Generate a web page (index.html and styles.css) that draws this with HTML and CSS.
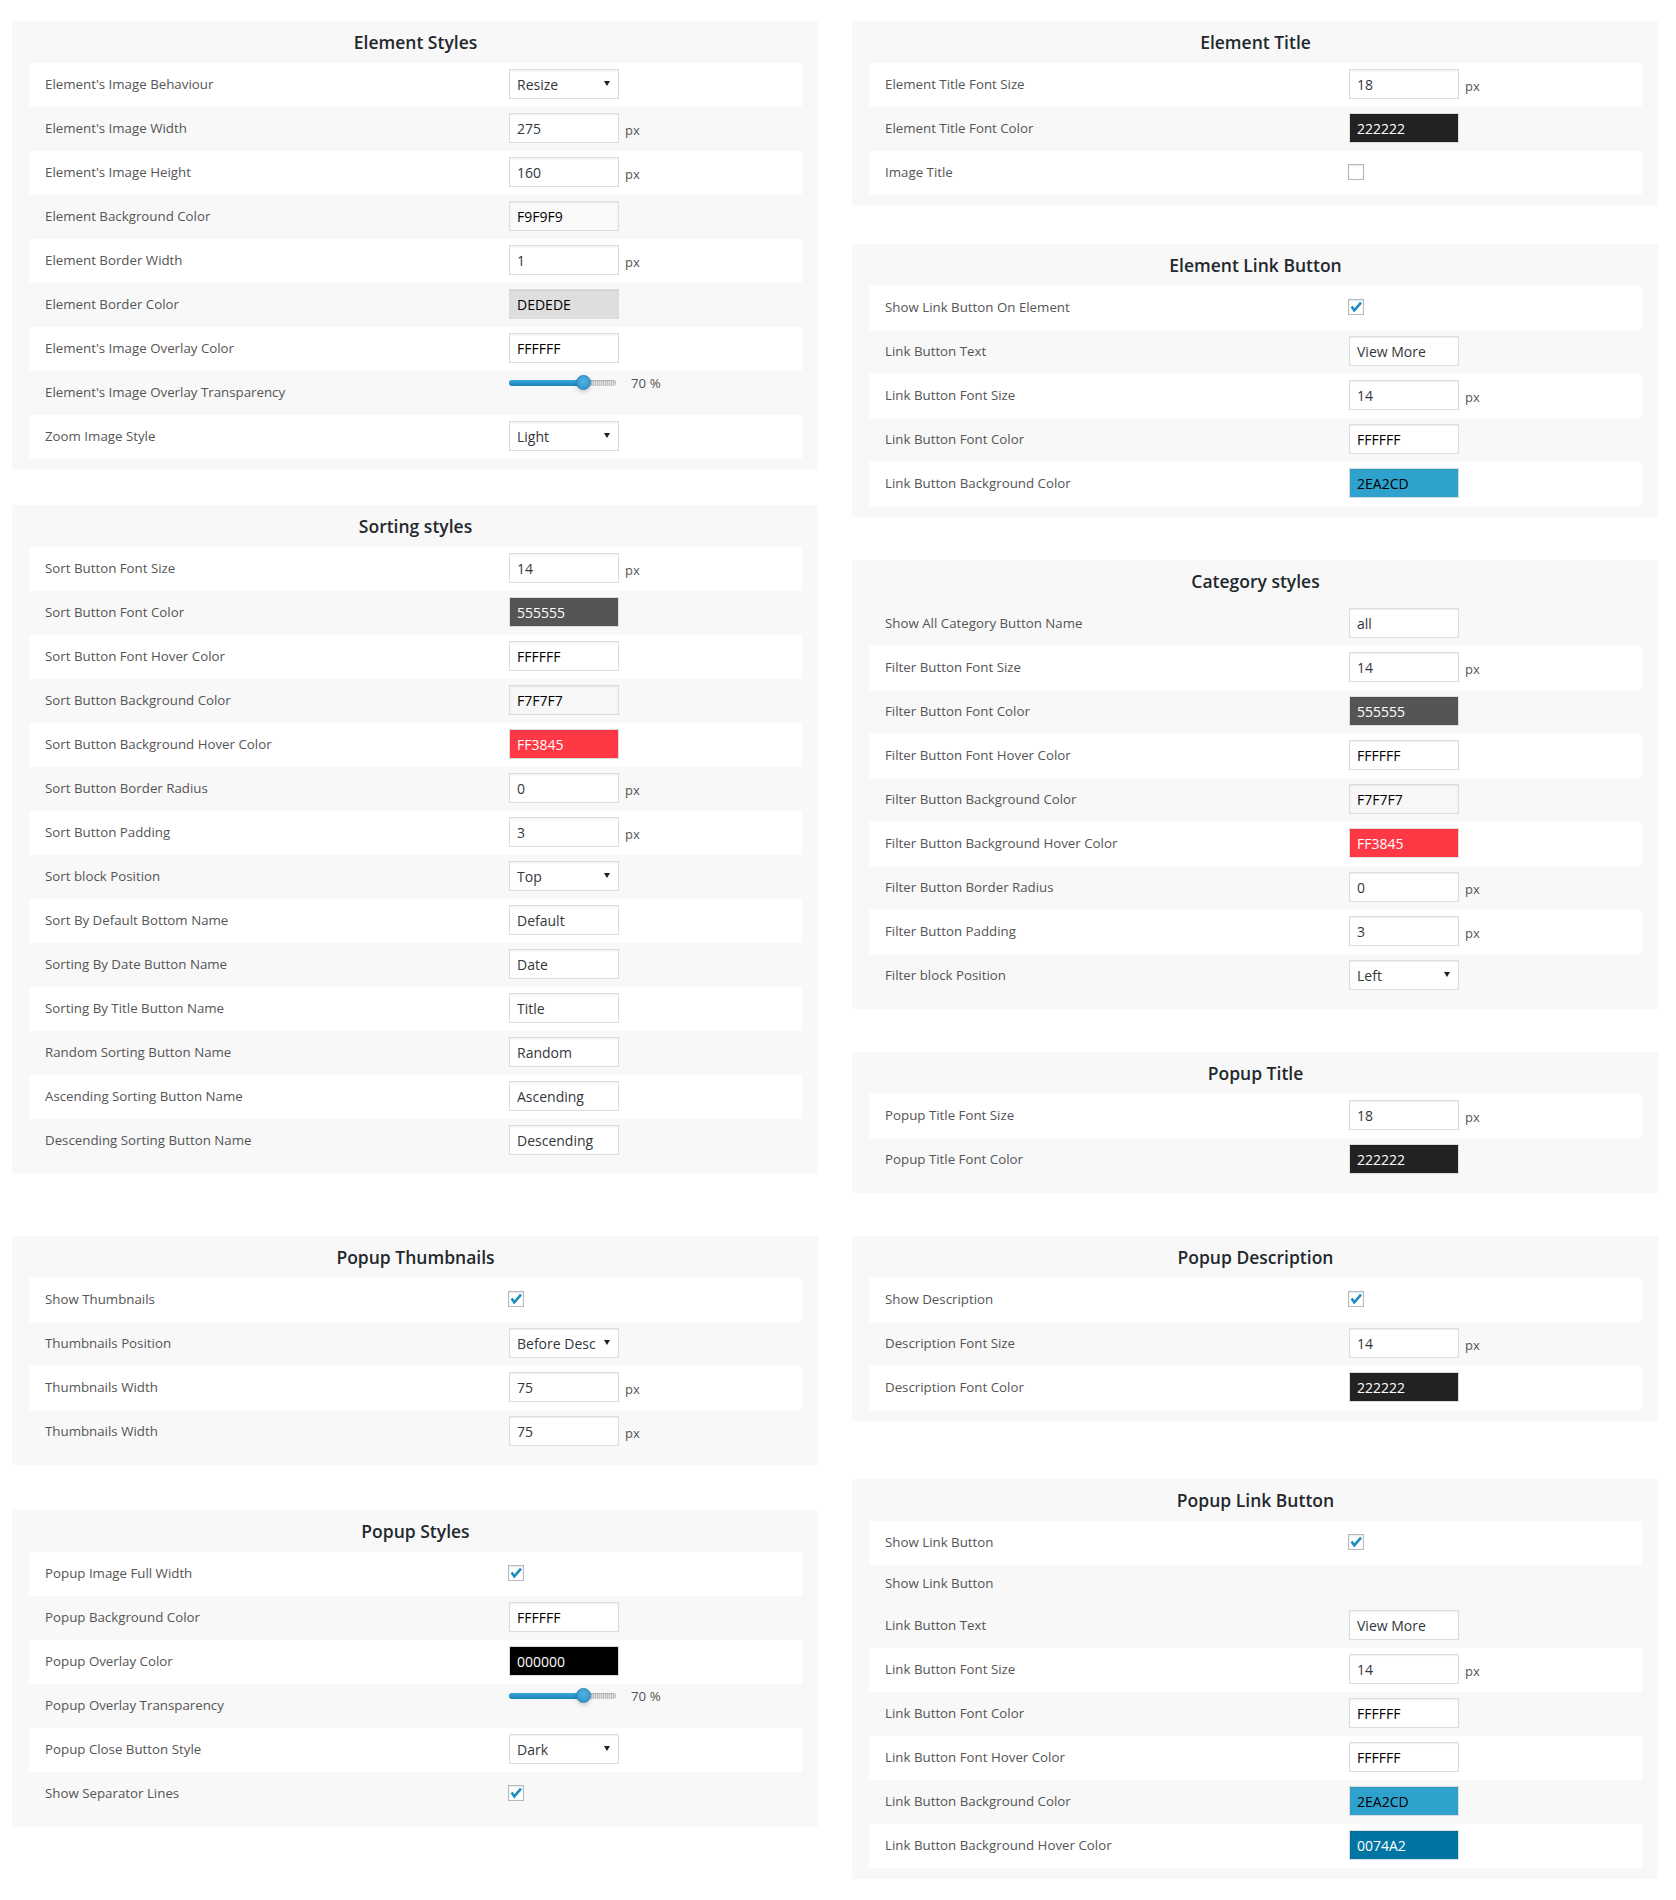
FILE: index.html
```html
<!DOCTYPE html>
<html lang="en">
<head>
<meta charset="utf-8">
<title>Gallery Settings</title>
<link rel="stylesheet" href="styles.css">
</head>
<body>
<div class="page">

  <!-- Row 1, left -->
  <div class="stack">
    <section class="panel gap-35">
      <h2 class="panel-title">Element Styles</h2>
      <div class="row w"><span class="label">Element's Image Behaviour</span><div class="value"><span class="select-wrap"><select class="field"><option>Resize</option></select></span></div></div>
      <div class="row"><span class="label">Element's Image Width</span><div class="value"><input class="field" type="text" value="275"><span class="unit">px</span></div></div>
      <div class="row w"><span class="label">Element's Image Height</span><div class="value"><input class="field" type="text" value="160"><span class="unit">px</span></div></div>
      <div class="row"><span class="label">Element Background Color</span><div class="value"><input class="field color bg-f9f9f9" type="text" value="F9F9F9"></div></div>
      <div class="row w"><span class="label">Element Border Width</span><div class="value"><input class="field" type="text" value="1"><span class="unit">px</span></div></div>
      <div class="row"><span class="label">Element Border Color</span><div class="value"><input class="field color bg-dedede" type="text" value="DEDEDE"></div></div>
      <div class="row w"><span class="label">Element's Image Overlay Color</span><div class="value"><input class="field color bg-ffffff" type="text" value="FFFFFF"></div></div>
      <div class="row"><span class="label">Element's Image Overlay Transparency</span><div class="value top"><div class="slider" style="--v:70%"><div class="track"><div class="fill"></div><div class="thumb"></div></div><span class="pct">70 %</span></div></div></div>
      <div class="row w"><span class="label">Zoom Image Style</span><div class="value"><span class="select-wrap"><select class="field"><option>Light</option></select></span></div></div>
    </section>

    <section class="panel">
      <h2 class="panel-title">Sorting styles</h2>
      <div class="row w"><span class="label">Sort Button Font Size</span><div class="value"><input class="field" type="text" value="14"><span class="unit">px</span></div></div>
      <div class="row"><span class="label">Sort Button Font Color</span><div class="value"><input class="field color bg-555555 dark" type="text" value="555555"></div></div>
      <div class="row w"><span class="label">Sort Button Font Hover Color</span><div class="value"><input class="field color bg-ffffff" type="text" value="FFFFFF"></div></div>
      <div class="row"><span class="label">Sort Button Background Color</span><div class="value"><input class="field color bg-f7f7f7" type="text" value="F7F7F7"></div></div>
      <div class="row w"><span class="label">Sort Button Background Hover Color</span><div class="value"><input class="field color bg-ff3845 dark" type="text" value="FF3845"></div></div>
      <div class="row"><span class="label">Sort Button Border Radius</span><div class="value"><input class="field" type="text" value="0"><span class="unit">px</span></div></div>
      <div class="row w"><span class="label">Sort Button Padding</span><div class="value"><input class="field" type="text" value="3"><span class="unit">px</span></div></div>
      <div class="row"><span class="label">Sort block Position</span><div class="value"><span class="select-wrap"><select class="field"><option>Top</option></select></span></div></div>
      <div class="row w"><span class="label">Sort By Default Bottom Name</span><div class="value"><input class="field" type="text" value="Default"></div></div>
      <div class="row"><span class="label">Sorting By Date Button Name</span><div class="value"><input class="field" type="text" value="Date"></div></div>
      <div class="row w"><span class="label">Sorting By Title Button Name</span><div class="value"><input class="field" type="text" value="Title"></div></div>
      <div class="row"><span class="label">Random Sorting Button Name</span><div class="value"><input class="field" type="text" value="Random"></div></div>
      <div class="row w"><span class="label">Ascending Sorting Button Name</span><div class="value"><input class="field" type="text" value="Ascending"></div></div>
      <div class="row"><span class="label">Descending Sorting Button Name</span><div class="value"><input class="field" type="text" value="Descending"></div></div>
    </section>
  </div>

  <!-- Row 1, right -->
  <div class="stack">
    <section class="panel gap-38">
      <h2 class="panel-title">Element Title</h2>
      <div class="row w"><span class="label">Element Title Font Size</span><div class="value"><input class="field" type="text" value="18"><span class="unit">px</span></div></div>
      <div class="row"><span class="label">Element Title Font Color</span><div class="value"><input class="field color bg-222222 dark" type="text" value="222222"></div></div>
      <div class="row w"><span class="label">Image Title</span><div class="value"><span class="check"></span></div></div>
    </section>

    <section class="panel gap-43">
      <h2 class="panel-title">Element Link Button</h2>
      <div class="row w"><span class="label">Show Link Button On Element</span><div class="value"><span class="check"><svg viewBox="0 0 14 14" width="14" height="14"><path d="M2.6 6.6 L5.3 10.4 L12 2.6"/></svg></span></div></div>
      <div class="row"><span class="label">Link Button Text</span><div class="value"><input class="field" type="text" value="View More"></div></div>
      <div class="row w"><span class="label">Link Button Font Size</span><div class="value"><input class="field" type="text" value="14"><span class="unit">px</span></div></div>
      <div class="row"><span class="label">Link Button Font Color</span><div class="value"><input class="field color bg-ffffff" type="text" value="FFFFFF"></div></div>
      <div class="row w"><span class="label">Link Button Background Color</span><div class="value"><input class="field color bg-2ea2cd" type="text" value="2EA2CD"></div></div>
    </section>

    <section class="panel gap-43">
      <h2 class="panel-title">Category styles</h2>
      <div class="row"><span class="label">Show All Category Button Name</span><div class="value"><input class="field" type="text" value="all"></div></div>
      <div class="row w"><span class="label">Filter Button Font Size</span><div class="value"><input class="field" type="text" value="14"><span class="unit">px</span></div></div>
      <div class="row"><span class="label">Filter Button Font Color</span><div class="value"><input class="field color bg-555555 dark" type="text" value="555555"></div></div>
      <div class="row w"><span class="label">Filter Button Font Hover Color</span><div class="value"><input class="field color bg-ffffff" type="text" value="FFFFFF"></div></div>
      <div class="row"><span class="label">Filter Button Background Color</span><div class="value"><input class="field color bg-f7f7f7" type="text" value="F7F7F7"></div></div>
      <div class="row w"><span class="label">Filter Button Background Hover Color</span><div class="value"><input class="field color bg-ff3845 dark" type="text" value="FF3845"></div></div>
      <div class="row"><span class="label">Filter Button Border Radius</span><div class="value"><input class="field" type="text" value="0"><span class="unit">px</span></div></div>
      <div class="row w"><span class="label">Filter Button Padding</span><div class="value"><input class="field" type="text" value="3"><span class="unit">px</span></div></div>
      <div class="row"><span class="label">Filter block Position</span><div class="value"><span class="select-wrap"><select class="field"><option>Left</option></select></span></div></div>
    </section>

    <section class="panel">
      <h2 class="panel-title">Popup Title</h2>
      <div class="row w"><span class="label">Popup Title Font Size</span><div class="value"><input class="field" type="text" value="18"><span class="unit">px</span></div></div>
      <div class="row"><span class="label">Popup Title Font Color</span><div class="value"><input class="field color bg-222222 dark" type="text" value="222222"></div></div>
    </section>
  </div>

  <!-- Row 2, left -->
  <div class="stack">
    <section class="panel gap-45">
      <h2 class="panel-title">Popup Thumbnails</h2>
      <div class="row w"><span class="label">Show Thumbnails</span><div class="value"><span class="check"><svg viewBox="0 0 14 14" width="14" height="14"><path d="M2.6 6.6 L5.3 10.4 L12 2.6"/></svg></span></div></div>
      <div class="row"><span class="label">Thumbnails Position</span><div class="value"><span class="select-wrap"><select class="field"><option>Before Desc</option></select></span></div></div>
      <div class="row w"><span class="label">Thumbnails Width</span><div class="value"><input class="field" type="text" value="75"><span class="unit">px</span></div></div>
      <div class="row"><span class="label">Thumbnails Width</span><div class="value"><input class="field" type="text" value="75"><span class="unit">px</span></div></div>
    </section>

    <section class="panel">
      <h2 class="panel-title">Popup Styles</h2>
      <div class="row w"><span class="label">Popup Image Full Width</span><div class="value"><span class="check"><svg viewBox="0 0 14 14" width="14" height="14"><path d="M2.6 6.6 L5.3 10.4 L12 2.6"/></svg></span></div></div>
      <div class="row"><span class="label">Popup Background Color</span><div class="value"><input class="field color bg-ffffff" type="text" value="FFFFFF"></div></div>
      <div class="row w"><span class="label">Popup Overlay Color</span><div class="value"><input class="field color bg-000000 dark" type="text" value="000000"></div></div>
      <div class="row"><span class="label">Popup Overlay Transparency</span><div class="value top"><div class="slider" style="--v:70%"><div class="track"><div class="fill"></div><div class="thumb"></div></div><span class="pct">70 %</span></div></div></div>
      <div class="row w"><span class="label">Popup Close Button Style</span><div class="value"><span class="select-wrap"><select class="field"><option>Dark</option></select></span></div></div>
      <div class="row"><span class="label">Show Separator Lines</span><div class="value"><span class="check"><svg viewBox="0 0 14 14" width="14" height="14"><path d="M2.6 6.6 L5.3 10.4 L12 2.6"/></svg></span></div></div>
    </section>
  </div>

  <!-- Row 2, right -->
  <div class="stack">
    <section class="panel gap-58">
      <h2 class="panel-title">Popup Description</h2>
      <div class="row w"><span class="label">Show Description</span><div class="value"><span class="check"><svg viewBox="0 0 14 14" width="14" height="14"><path d="M2.6 6.6 L5.3 10.4 L12 2.6"/></svg></span></div></div>
      <div class="row"><span class="label">Description Font Size</span><div class="value"><input class="field" type="text" value="14"><span class="unit">px</span></div></div>
      <div class="row w"><span class="label">Description Font Color</span><div class="value"><input class="field color bg-222222 dark" type="text" value="222222"></div></div>
    </section>

    <section class="panel">
      <h2 class="panel-title">Popup Link Button</h2>
      <div class="row w"><span class="label">Show Link Button</span><div class="value"><span class="check"><svg viewBox="0 0 14 14" width="14" height="14"><path d="M2.6 6.6 L5.3 10.4 L12 2.6"/></svg></span></div></div>
      <div class="row short"><span class="label">Show Link Button</span><div class="value"></div></div>
      <div class="row"><span class="label">Link Button Text</span><div class="value"><input class="field" type="text" value="View More"></div></div>
      <div class="row w"><span class="label">Link Button Font Size</span><div class="value"><input class="field" type="text" value="14"><span class="unit">px</span></div></div>
      <div class="row"><span class="label">Link Button Font Color</span><div class="value"><input class="field color bg-ffffff" type="text" value="FFFFFF"></div></div>
      <div class="row w"><span class="label">Link Button Font Hover Color</span><div class="value"><input class="field color bg-ffffff" type="text" value="FFFFFF"></div></div>
      <div class="row"><span class="label">Link Button Background Color</span><div class="value"><input class="field color bg-2ea2cd" type="text" value="2EA2CD"></div></div>
      <div class="row w"><span class="label">Link Button Background Hover Color</span><div class="value"><input class="field color bg-0074a2 dark" type="text" value="0074A2"></div></div>
    </section>
  </div>

</div>
</body>
</html>
```

FILE: styles.css
```css
html, body {
  margin: 0;
  padding: 0;
  background: #ffffff;
}

body {
  font-family: "Open Sans", "Noto Sans", sans-serif;
  color: #555555;
}

.page {
  display: grid;
  grid-template-columns: 806px 806px;
  column-gap: 34px;
  row-gap: 43px;
  align-items: start;
  padding: 21px 0 0 12px;
}

.stack {
  display: flex;
  flex-direction: column;
}

.panel {
  background: #f8f8f8;
  padding: 0 16px 11px 17px;
}

.gap-35 { margin-bottom: 35px; }
.gap-38 { margin-bottom: 38px; }
.gap-43 { margin-bottom: 43px; }
.gap-45 { margin-bottom: 45px; }
.gap-58 { margin-bottom: 58px; }

.panel-title {
  margin: 0;
  height: 42px;
  line-height: 43px;
  text-align: center;
  font-size: 17.5px;
  font-weight: 600;
  color: #23282d;
}

.row {
  box-sizing: border-box;
  display: grid;
  grid-template-columns: 480px 1fr;
  height: 44px;
  padding-bottom: 2px;
  align-items: center;
}

.row.w {
  background: #ffffff;
}

.row.short {
  height: 39px;
  padding-bottom: 0;
  align-items: start;
}

.row.short .label {
  padding-top: 9px;
  line-height: 18px;
}

.label {
  padding-left: 16px;
  font-size: 13.3px;
  color: #555555;
}

.value {
  display: flex;
  align-items: center;
  gap: 6px;
}

.value.top {
  align-self: start;
  padding-top: 4px;
}

.field {
  box-sizing: border-box;
  width: 110px;
  height: 30px;
  margin: 0;
  padding: 0 7px;
  border: 1px solid #dddddd;
  border-radius: 0;
  background: #ffffff;
  box-shadow: inset 0 1px 2px rgba(0, 0, 0, 0.07);
  font-family: "Open Sans", "Noto Sans", sans-serif;
  font-size: 14px;
  color: #32373c;
  outline: none;
}

.field.color { color: #000000; }
.field.color.dark { color: #ffffff; }

.bg-f9f9f9 { background: #f9f9f9; }
.bg-f7f7f7 { background: #f7f7f7; }
.bg-dedede { background: #dedede; }
.bg-ffffff { background: #ffffff; }
.bg-555555 { background: #555555; }
.bg-222222 { background: #222222; }
.bg-000000 { background: #000000; }
.bg-ff3845 { background: #ff3845; }
.bg-2ea2cd { background: #2ea2cd; }
.bg-0074a2 { background: #0074a2; }

.unit {
  font-size: 13px;
  color: #555555;
  padding-top: 4px;
}

.select-wrap {
  position: relative;
  display: block;
  width: 110px;
  height: 30px;
}

.select-wrap select {
  appearance: none;
  -webkit-appearance: none;
  width: 100%;
  height: 100%;
  padding-right: 20px;
}

.select-wrap::after {
  content: "";
  position: absolute;
  right: 9px;
  top: 50%;
  margin-top: -3px;
  border-left: 3px solid transparent;
  border-right: 3px solid transparent;
  border-top: 5px solid #222222;
  pointer-events: none;
}

.check {
  box-sizing: border-box;
  display: flex;
  align-items: center;
  justify-content: center;
  width: 16px;
  height: 16px;
  margin-left: -1px;
  border: 1px solid #b4b9be;
  background: #ffffff;
  box-shadow: inset 0 1px 2px rgba(0, 0, 0, 0.1);
}

.check svg path {
  fill: none;
  stroke: #1e8cbe;
  stroke-width: 2.6;
  stroke-linecap: butt;
  stroke-linejoin: miter;
}

.slider {
  display: flex;
  align-items: center;
  gap: 15px;
  height: 15px;
}

.track {
  position: relative;
  width: 107px;
  height: 6px;
  border-radius: 3px;
  background: repeating-linear-gradient(90deg, #c2c2c2 0 1px, #dddddd 1px 2px);
  box-shadow: inset 0 1px 1px rgba(0, 0, 0, 0.15);
}

.fill {
  position: absolute;
  left: 0;
  top: 0;
  bottom: 0;
  width: var(--v);
  border-radius: 3px;
  background: linear-gradient(#3aa7dc, #1b84b9);
}

.thumb {
  position: absolute;
  top: 50%;
  left: var(--v);
  box-sizing: border-box;
  width: 15px;
  height: 15px;
  margin: -7.5px 0 0 -7.5px;
  border-radius: 50%;
  border: 1px solid #2680b5;
  background: radial-gradient(circle at 50% 40%, #52b2e2, #2a8fc6);
  box-shadow: 0 2px 4px rgba(0, 0, 0, 0.18);
}

.pct {
  font-size: 13.3px;
  color: #555555;
}
```
